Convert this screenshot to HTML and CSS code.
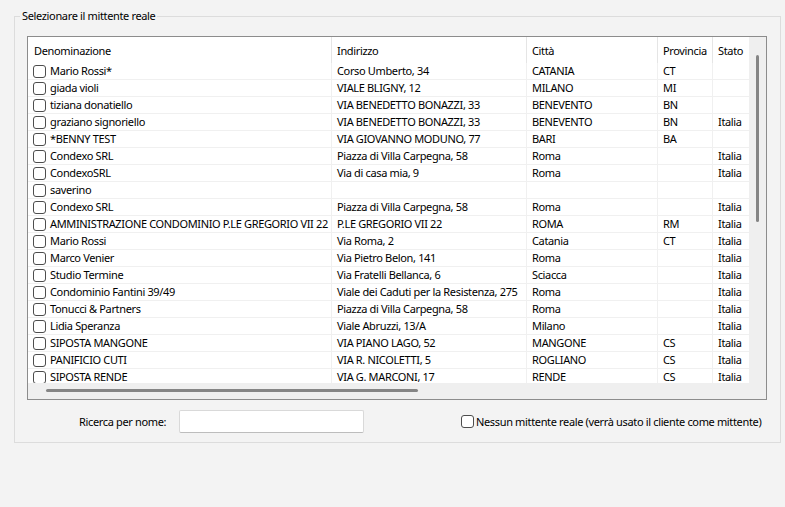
FILE: index.html
```html
<!DOCTYPE html>
<html>
<head>
  <title>Mittente reale</title>
  <link rel="stylesheet" href="styles.css">
</head>
<body>
  <div class="group">
    <span class="group-title">Selezionare il mittente reale</span>
    <div class="listbox">
      <div class="grid-area">
        <table class="grid">
          <colgroup>
            <col class="c-name"><col class="c-addr"><col class="c-city"><col class="c-prov"><col class="c-state">
          </colgroup>
          <thead>
            <tr><th>Denominazione</th><th>Indirizzo</th><th>Città</th><th>Provincia</th><th>Stato</th></tr>
          </thead>
          <tbody>
            <tr><td><span class="chk"></span>Mario Rossi*</td><td>Corso Umberto, 34</td><td>CATANIA</td><td>CT</td><td></td></tr>
            <tr><td><span class="chk"></span>giada violi</td><td>VIALE BLIGNY, 12</td><td>MILANO</td><td>MI</td><td></td></tr>
            <tr><td><span class="chk"></span>tiziana donatiello</td><td>VIA BENEDETTO BONAZZI, 33</td><td>BENEVENTO</td><td>BN</td><td></td></tr>
            <tr><td><span class="chk"></span>graziano signoriello</td><td>VIA BENEDETTO BONAZZI, 33</td><td>BENEVENTO</td><td>BN</td><td>Italia</td></tr>
            <tr><td><span class="chk"></span>*BENNY TEST</td><td>VIA GIOVANNO MODUNO, 77</td><td>BARI</td><td>BA</td><td></td></tr>
            <tr><td><span class="chk"></span>Condexo SRL</td><td>Piazza di Villa Carpegna, 58</td><td>Roma</td><td></td><td>Italia</td></tr>
            <tr><td><span class="chk"></span>CondexoSRL</td><td>Via di casa mia, 9</td><td>Roma</td><td></td><td>Italia</td></tr>
            <tr><td><span class="chk"></span>saverino</td><td></td><td></td><td></td><td></td></tr>
            <tr><td><span class="chk"></span>Condexo SRL</td><td>Piazza di Villa Carpegna, 58</td><td>Roma</td><td></td><td>Italia</td></tr>
            <tr><td><span class="chk"></span>AMMINISTRAZIONE CONDOMINIO P.LE GREGORIO VII 22</td><td>P.LE GREGORIO VII 22</td><td>ROMA</td><td>RM</td><td>Italia</td></tr>
            <tr><td><span class="chk"></span>Mario Rossi</td><td>Via Roma, 2</td><td>Catania</td><td>CT</td><td>Italia</td></tr>
            <tr><td><span class="chk"></span>Marco Venier</td><td>Via Pietro Belon, 141</td><td>Roma</td><td></td><td>Italia</td></tr>
            <tr><td><span class="chk"></span>Studio Termine</td><td>Via Fratelli Bellanca, 6</td><td>Sciacca</td><td></td><td>Italia</td></tr>
            <tr><td><span class="chk"></span>Condominio Fantini 39/49</td><td>Viale dei Caduti per la Resistenza, 275</td><td>Roma</td><td></td><td>Italia</td></tr>
            <tr><td><span class="chk"></span>Tonucci &amp; Partners</td><td>Piazza di Villa Carpegna, 58</td><td>Roma</td><td></td><td>Italia</td></tr>
            <tr><td><span class="chk"></span>Lidia Speranza</td><td>Viale Abruzzi, 13/A</td><td>Milano</td><td></td><td>Italia</td></tr>
            <tr><td><span class="chk"></span>SIPOSTA MANGONE</td><td>VIA PIANO LAGO, 52</td><td>MANGONE</td><td>CS</td><td>Italia</td></tr>
            <tr><td><span class="chk"></span>PANIFICIO CUTI</td><td>VIA R. NICOLETTI, 5</td><td>ROGLIANO</td><td>CS</td><td>Italia</td></tr>
            <tr><td><span class="chk"></span>SIPOSTA RENDE</td><td>VIA G. MARCONI, 17</td><td>RENDE</td><td>CS</td><td>Italia</td></tr>
          </tbody>
        </table>
      </div>
      <div class="vscroll"><div class="vthumb"></div></div>
      <div class="hscroll"><div class="hthumb"></div></div>
    </div>
    <div class="search-row">
      <label class="search-label" for="search">Ricerca per nome:</label>
      <input class="search-input" id="search" type="text">
      <label class="no-sender"><span class="chk"></span>Nessun mittente reale (verrà usato il cliente come mittente)</label>
    </div>
  </div>
</body>
</html>
```

FILE: styles.css
```css
body {
  margin: 0;
  background-color: #f3f3f3;
  font-family: "Noto Sans", sans-serif;
  font-size: 11px;
  letter-spacing: -0.35px;
  color: #000;
}
.group {
  position: relative;
  width: 765px;
  margin: 16px 0 0 14px;
  border: 1px solid #dcdcdc;
}
.group-title {
  position: absolute;
  top: -9px;
  left: 5px;
  padding: 0 2px;
  line-height: 16px;
  background-color: #f3f3f3;
  white-space: nowrap;
}
.listbox {
  display: grid;
  grid-template-columns: 721px 17px;
  grid-template-rows: 346px 16px;
  width: 738px;
  margin: 19px 0 0 12px;
  border: 1px solid #8c8c8c;
  background: #fff;
}
.grid-area {
  overflow: hidden;
}
.grid {
  width: 721px;
  table-layout: fixed;
  border-collapse: separate;
  border-spacing: 0;
}
.c-name { width: 303px; }
.c-addr { width: 195px; }
.c-city { width: 131px; }
.c-prov { width: 55px; }
.c-state { width: 37px; }
.grid th {
  height: 26px;
  box-sizing: border-box;
  padding: 0 6px;
  text-align: left;
  font-weight: normal;
  white-space: nowrap;
  overflow: hidden;
}
.grid th + th {
  border-left: 1px solid #e5e5e5;
  padding-left: 5px;
}
.grid td {
  height: 17px;
  box-sizing: border-box;
  padding: 0 6px;
  border-bottom: 1px solid #f0f0f0;
  white-space: nowrap;
  overflow: hidden;
  line-height: 16px;
}
.grid td + td {
  border-left: 1px solid #f0f0f0;
  padding-left: 5px;
}
.grid td:first-child {
  padding-left: 5px;
}
.chk {
  display: inline-block;
  width: 13px;
  height: 13px;
  box-sizing: border-box;
  border: 1px solid #4d4d4d;
  border-radius: 3px;
  background: #fff;
  vertical-align: -3px;
  margin-right: 4px;
}
.vscroll {
  background: #efefef;
}
.vthumb {
  width: 3px;
  height: 167px;
  margin: 18px auto 0;
  background: #858585;
  border-radius: 2px;
}
.hscroll {
  grid-column: 1 / 3;
  background: #efefef;
}
.hthumb {
  width: 372px;
  height: 3px;
  margin: 6px 0 0 18px;
  background: #858585;
  border-radius: 2px;
}
.search-row {
  display: flex;
  align-items: center;
  height: 23px;
  margin: 10px 0 9px 64px;
  white-space: nowrap;
}
.search-label {
  width: 87px;
}
.search-input {
  width: 185px;
  height: 23px;
  box-sizing: border-box;
  margin: 0 0 0 13px;
  border: 1px solid #d9d9d9;
  border-bottom-color: #bdbdbd;
  background: #fff;
  border-radius: 2px;
}
.no-sender {
  margin-left: 97px;
  display: flex;
  align-items: center;
}
.no-sender .chk {
  margin-right: 2px;
  vertical-align: middle;
}
```
